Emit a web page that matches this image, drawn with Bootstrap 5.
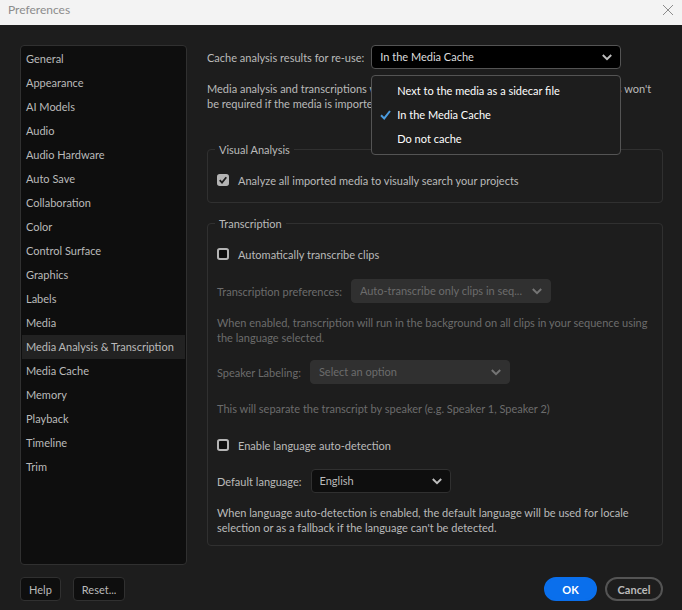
<!DOCTYPE html>
<html lang="en">
<head>
<meta charset="utf-8">
<meta name="viewport" content="width=device-width, initial-scale=1">
<title>Preferences</title>
<link href="https://cdn.jsdelivr.net/npm/bootstrap@5.3.0/dist/css/bootstrap.min.css" rel="stylesheet">
<style>
  body {
    background: #1d1d1d;
    color: #bababa;
    font-family: Lato, "Noto Sans", sans-serif;
    font-size: 11px;
    line-height: 15px;
  }
  .titlebar { background: #f3f3f3; color: #8c8c8c; height: 25px; padding: 2px 8px 0; font-size: 12px; }
  .titlebar button { color: #8c8c8c; height: 15px; line-height: 0; }
  .workspace { padding: 20px 19px 12px 20px; gap: 20px; }
  .categories { flex: 0 0 167px; background: #0e0e0e; border: 1px solid #303030; border-radius: 4px; padding: 0 1px; }
  .categories a { color: #bababa; line-height: 24px; padding: 0 4px; }
  .categories a.active { background: #222; }
  .categories .nav { padding-top: 1px; }
  .pref-select {
    height: 24px;
    padding: 0 24px 0 8px;
    font-size: 11px;
    line-height: 22px;
    color: #bababa;
    border: 1px solid #303030;
    border-radius: 4px;
    background-color: #0e0e0e;
    background-image: url("data:image/svg+xml,%3Csvg xmlns='http://www.w3.org/2000/svg' viewBox='0 0 10 7'%3E%3Cpath d='M.8 1 5 5.2 9.2 1' fill='none' stroke='%23bdbdbd' stroke-width='2'/%3E%3C/svg%3E");
    background-size: 10px 7px;
    background-position: right 8px center;
  }
  .pref-select:disabled {
    color: #6c6c6c;
    opacity: 1;
    border-color: #303030;
    background-color: #303030;
    background-image: url("data:image/svg+xml,%3Csvg xmlns='http://www.w3.org/2000/svg' viewBox='0 0 10 7'%3E%3Cpath d='M.8 1 5 5.2 9.2 1' fill='none' stroke='%23757575' stroke-width='2'/%3E%3C/svg%3E");
  }
  .pref-select.open { background-color: #000; border-color: #545454; color: #dcdcdc; }
  .w-long { width: 250px; }
  .w-mid { width: 200px; }
  .w-short { width: 140px; }
  .choices {
    top: 30px; left: 0; z-index: 5;
    background: #1d1d1d; border: 1px solid #545454; border-radius: 4px; padding: 2px 0 4px;
    color: #fff;
  }
  .choices li { height: 24px; padding-left: 25px; }
  .choices svg { left: 8px; top: 8px; }
  .group { border: 1px solid #303030; border-radius: 4px; padding: 0 9px 10px; }
  .group legend { font-size: 11px; line-height: 15px; margin: 0 0 11px -2px; padding: 0 4px; }
  .tick {
    width: 12px; height: 12px; margin: 0; flex: none;
    background-color: #0e0e0e; border: 2px solid #b4b4b4; border-radius: 2px;
  }
  .tick:checked {
    background-color: #b4b4b4; border-color: #b4b4b4;
    background-size: 8px 8px;
    background-image: url("data:image/svg+xml,%3Csvg xmlns='http://www.w3.org/2000/svg' viewBox='0 0 8 8'%3E%3Cpath d='M.7 4.2 3 6.6 7.3 1.3' fill='none' stroke='%231d1d1d' stroke-width='1.8'/%3E%3C/svg%3E");
  }
  .opt { gap: 9px; height: 24px; }
  .fld { gap: 7px; }
  .group .fld { gap: 9px; }
  .dim { color: #6c6c6c; }
  .gap-s { margin-top: 12px; }
  .gap-m { margin-top: 13px; }
  .gap-ml { margin-top: 15px; }
  .gap-l { margin-top: 17px; }
  .gap-xl { margin-top: 31px; }
  .actions { padding: 0 19px 9px 20px; }
  .pref-btn {
    --bs-btn-font-size: 11px; --bs-btn-line-height: 15px;
    --bs-btn-color: #bababa; --bs-btn-bg: #0e0e0e; --bs-btn-border-color: #303030;
    --bs-btn-padding-x: 8px; --bs-btn-padding-y: 0px; --bs-btn-border-radius: 4px;
    height: 24px;
  }
  .pill-btn { border-width: 2px; border-radius: 12px; font-weight: 700; min-width: 58px; --bs-btn-bg: transparent; --bs-btn-border-color: #545454; }
  .pill-ok { min-width: 53px; --bs-btn-bg: #0a6fec; --bs-btn-border-color: #0a6fec; --bs-btn-color: #fff; }
  .btn-row { gap: 12px; }
</style>
</head>
<body class="d-flex flex-column min-vh-100">
<header class="titlebar d-flex justify-content-between">
  <span>Preferences</span>
  <button type="button" class="border-0 bg-transparent p-0" aria-label="Close">
    <svg width="12" height="12" viewBox="0 0 12 12" fill="none" stroke="currentColor"><path d="M1 1l10 10M11 1 1 11"/></svg>
  </button>
</header>

<main class="workspace d-flex flex-grow-1">
  <div class="categories">
    <nav class="nav flex-column" aria-label="Categories">
      <a class="text-decoration-none" href="#">General</a>
      <a class="text-decoration-none" href="#">Appearance</a>
      <a class="text-decoration-none" href="#">AI Models</a>
      <a class="text-decoration-none" href="#">Audio</a>
      <a class="text-decoration-none" href="#">Audio Hardware</a>
      <a class="text-decoration-none" href="#">Auto Save</a>
      <a class="text-decoration-none" href="#">Collaboration</a>
      <a class="text-decoration-none" href="#">Color</a>
      <a class="text-decoration-none" href="#">Control Surface</a>
      <a class="text-decoration-none" href="#">Graphics</a>
      <a class="text-decoration-none" href="#">Labels</a>
      <a class="text-decoration-none" href="#">Media</a>
      <a class="text-decoration-none text-nowrap active" aria-current="page" href="#">Media Analysis &amp; Transcription</a>
      <a class="text-decoration-none" href="#">Media Cache</a>
      <a class="text-decoration-none" href="#">Memory</a>
      <a class="text-decoration-none" href="#">Playback</a>
      <a class="text-decoration-none" href="#">Timeline</a>
      <a class="text-decoration-none" href="#">Trim</a>
    </nav>
  </div>

  <form class="flex-fill">
    <div class="d-flex align-items-center fld">
      <label for="cache">Cache analysis results for re-use:</label>
      <div class="position-relative">
        <select id="cache" class="form-select pref-select open w-long">
          <option>Next to the media as a sidecar file</option>
          <option selected>In the Media Cache</option>
          <option>Do not cache</option>
        </select>
        <ul class="choices list-unstyled m-0 position-absolute w-100" role="listbox" aria-label="Cache analysis results">
          <li class="d-flex align-items-center" role="option">Next to the media as a sidecar file</li>
          <li class="d-flex align-items-center position-relative" role="option" aria-selected="true">
            <svg class="position-absolute" width="11" height="10" viewBox="0 0 11 10" fill="none" stroke="#4b9ce0" stroke-width="2"><path d="M1 5.2 4.2 8.4 10 1"/></svg>
            In the Media Cache
          </li>
          <li class="d-flex align-items-center" role="option">Do not cache</li>
        </ul>
      </div>
    </div>
    <p class="gap-s mb-0">Media analysis and transcriptions will be cached for your later use so that new analysis won't be required if the media is imported again.</p>

    <fieldset class="group gap-xl">
      <legend class="float-none w-auto">Visual Analysis</legend>
      <div class="opt d-flex align-items-center">
        <input class="form-check-input tick" type="checkbox" id="analyze" checked>
        <label for="analyze">Analyze all imported media to visually search your projects</label>
      </div>
    </fieldset>

    <fieldset class="group gap-m">
      <legend class="float-none w-auto">Transcription</legend>
      <div class="opt d-flex align-items-center">
        <input class="form-check-input tick" type="checkbox" id="auto">
        <label for="auto">Automatically transcribe clips</label>
      </div>
      <div class="fld d-flex align-items-center gap-m dim">
        <label for="prefs">Transcription preferences:</label>
        <select id="prefs" class="form-select pref-select w-mid" disabled><option>Auto-transcribe only clips in seq...</option></select>
      </div>
      <p class="gap-s mb-0 dim">When enabled, transcription will run in the background on all clips in your sequence using the language selected.</p>
      <div class="fld d-flex align-items-center gap-ml dim">
        <label for="speaker">Speaker Labeling:</label>
        <select id="speaker" class="form-select pref-select w-mid" disabled><option>Select an option</option></select>
      </div>
      <p class="gap-l mb-0 dim">This will separate the transcript by speaker (e.g. Speaker 1, Speaker 2)</p>
      <div class="opt d-flex align-items-center gap-l">
        <input class="form-check-input tick" type="checkbox" id="detect">
        <label for="detect">Enable language auto-detection</label>
      </div>
      <div class="fld d-flex align-items-center gap-s">
        <label for="lang">Default language:</label>
        <select id="lang" class="form-select pref-select w-short"><option>English</option></select>
      </div>
      <p class="gap-s mb-0">When language auto-detection is enabled, the default language will be used for locale selection or as a fallback if the language can't be detected.</p>
    </fieldset>
  </form>
</main>

<footer class="actions btn-row d-flex align-items-center">
  <button type="button" class="btn pref-btn">Help</button>
  <button type="button" class="btn pref-btn">Reset...</button>
  <div class="d-flex gap-2 ms-auto">
    <button type="button" class="btn pref-btn pill-btn pill-ok">OK</button>
    <button type="button" class="btn pref-btn pill-btn">Cancel</button>
  </div>
</footer>
<script src="https://cdn.jsdelivr.net/npm/bootstrap@5.3.0/dist/js/bootstrap.bundle.min.js"></script>
</body>
</html>
